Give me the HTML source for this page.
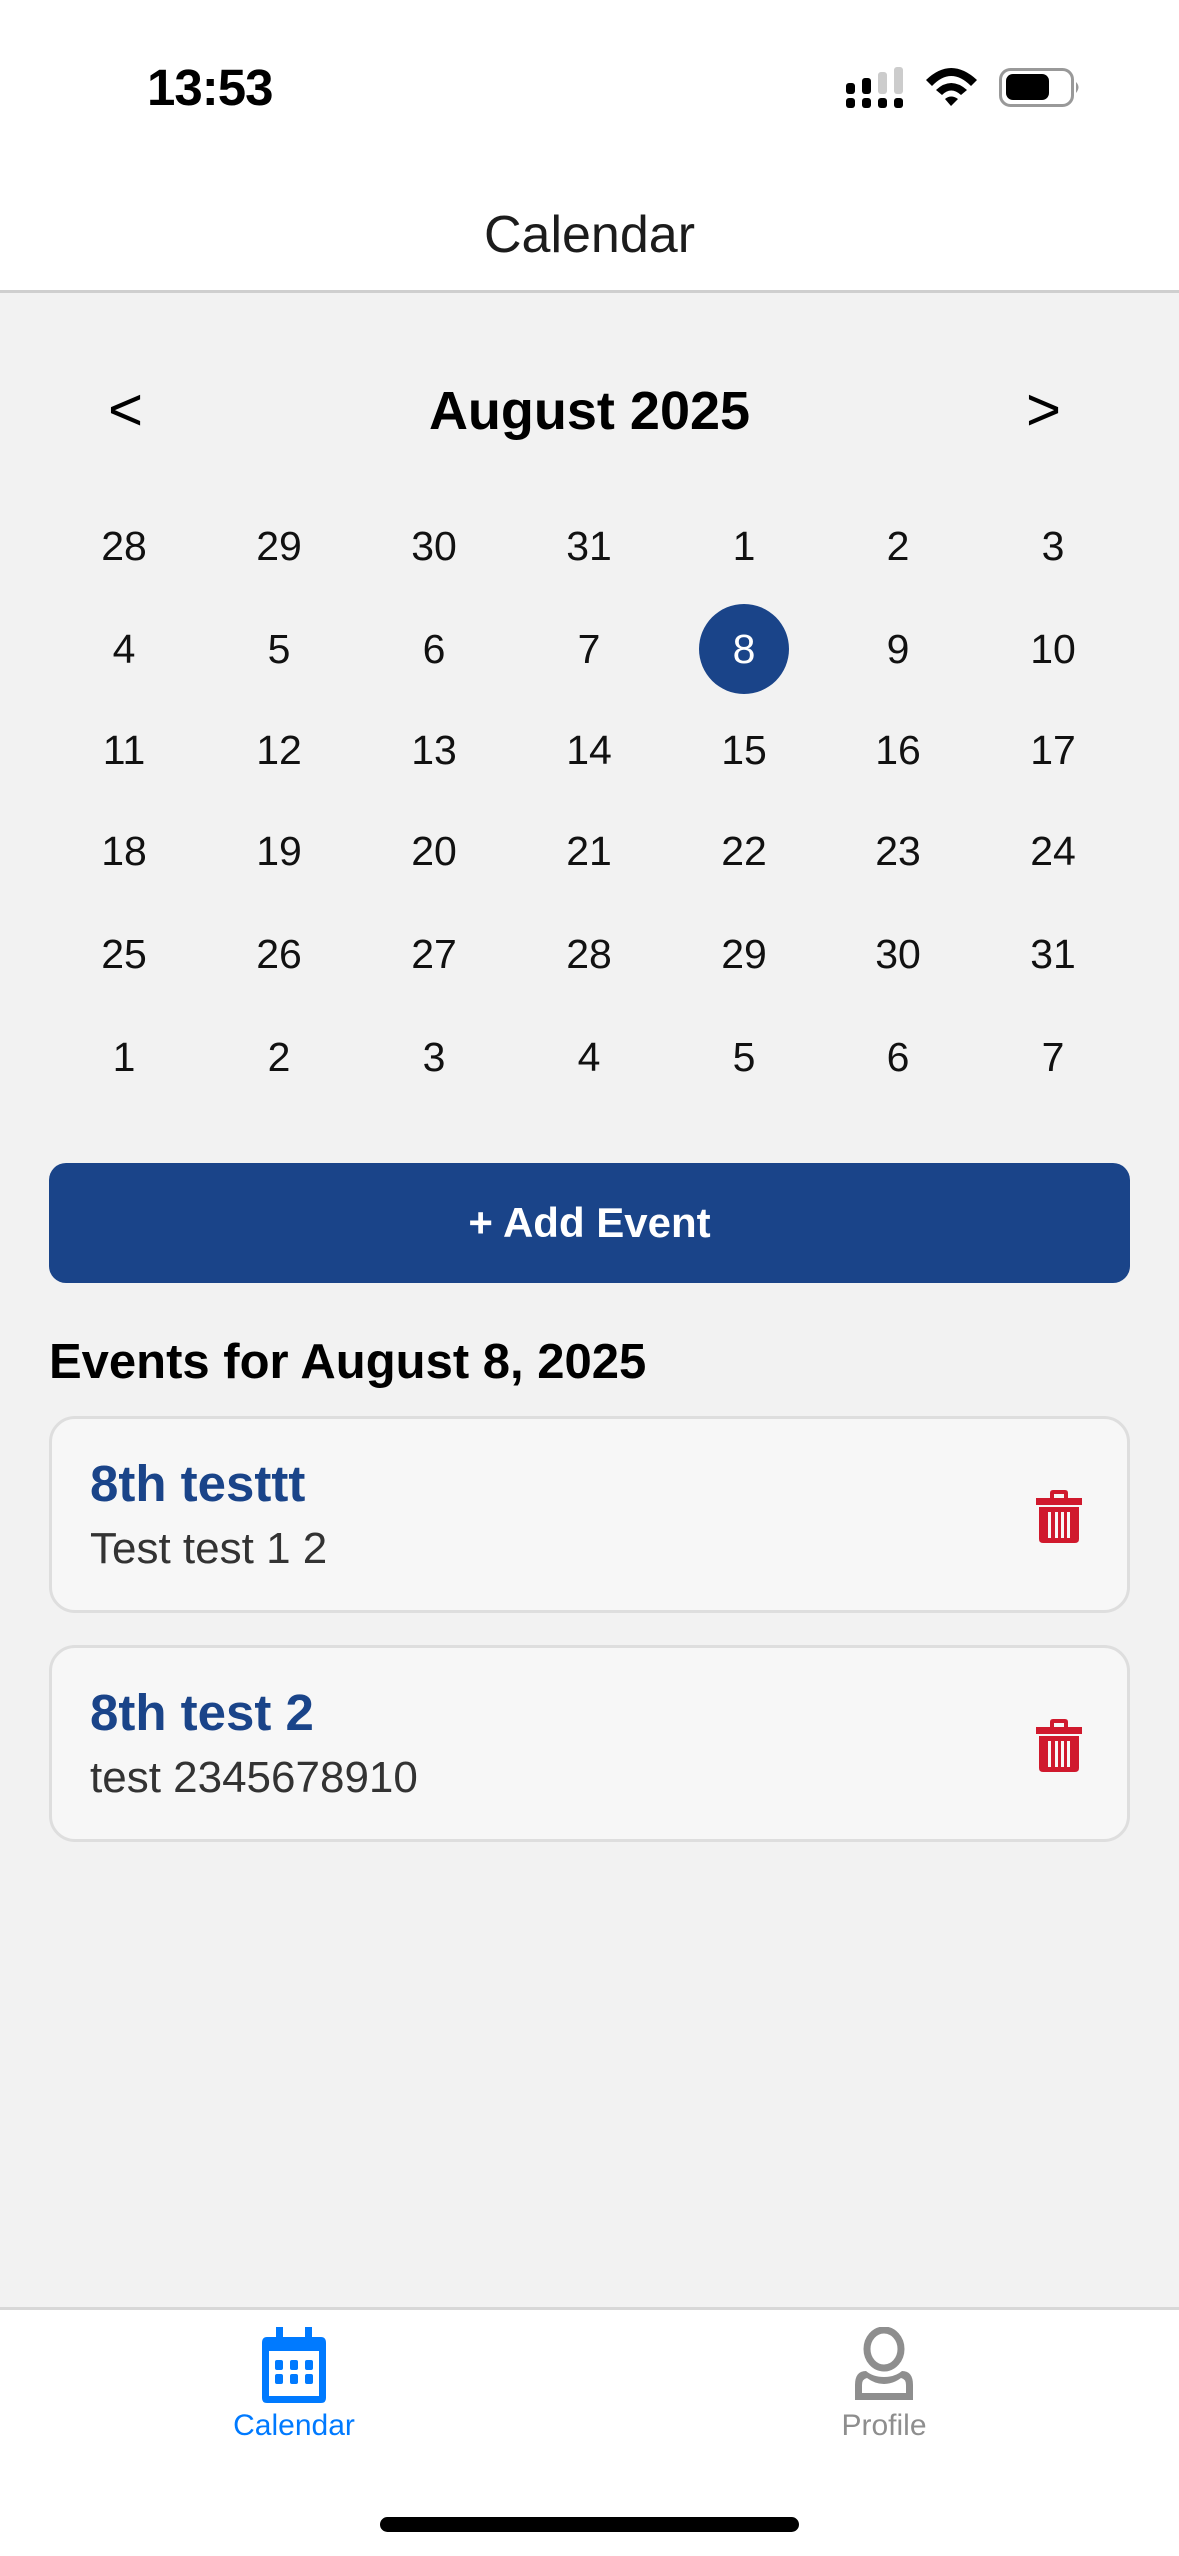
<!DOCTYPE html>
<html><head><meta charset="utf-8"><style>
*{margin:0;padding:0;box-sizing:border-box}
body{width:1179px;height:2556px;background:#f2f2f2;font-family:"Liberation Sans",sans-serif;position:relative;overflow:hidden;color:#000}
.a{position:absolute}
.hdr{left:0;top:0;width:1179px;height:293px;background:#fff;border-bottom:3px solid #cfcfcf}
.c{position:absolute;width:120px;margin-left:-60px;text-align:center;font-size:41px;line-height:50px;color:#111}
.card{position:absolute;left:49px;width:1081px;height:197px;background:#f7f7f7;border:3px solid #dedede;border-radius:26px}
.t{position:absolute;left:38px;font-weight:bold;font-size:51px;color:#1a4489;line-height:58px}
.s{position:absolute;left:38px;font-size:44px;color:#333;line-height:50px}
</style></head><body>
<div class="a hdr"></div>
<div class="a" style="left:147px;top:60px;font-size:51px;font-weight:bold;line-height:56px;letter-spacing:-1px">13:53</div>
<svg class="a" style="left:840px;top:60px" width="250" height="55" viewBox="840 60 250 55">
<rect x="846" y="98" width="9" height="10" rx="3"/><rect x="862" y="98" width="9" height="10" rx="3"/><rect x="878" y="98" width="9" height="10" rx="3"/><rect x="894" y="98" width="9" height="10" rx="3"/>
<rect x="846" y="83" width="9" height="11" rx="3"/><rect x="862" y="78" width="9" height="16" rx="3"/><rect x="878" y="72" width="9" height="22" rx="3" fill="#ccc"/><rect x="894" y="67" width="9" height="27" rx="3" fill="#ccc"/>
<path d="M926 80 Q951 56 977 80 L971 86 Q951 66 932 86Z M936 90 Q951 76 967 90 L961 95 Q951 86 942 95Z M945 99 Q951 94 958 99 L951 106Z"/>
<rect x="1000.5" y="69.5" width="72" height="36" rx="10" fill="none" stroke="#999" stroke-width="3"/>
<rect x="1006" y="74" width="43" height="26" rx="7"/>
<path d="M1076 82 Q1081 87 1076 93Z" fill="#999"/>
</svg>
<div class="a" style="left:0;width:1179px;top:205px;text-align:center;font-size:52px;line-height:60px;color:#1c1c1c">Calendar</div>
<div class="a" style="left:108px;top:378px;font-size:60px;line-height:64px">&lt;</div>
<div class="a" style="left:1026px;top:378px;font-size:60px;line-height:64px">&gt;</div>
<div class="a" style="left:0;width:1179px;top:380px;text-align:center;font-size:54px;font-weight:bold;line-height:62px">August 2025</div>
<div class="a" style="left:699px;top:604px;width:90px;height:90px;border-radius:45px;background:#1a4489"></div>
<div id="g"></div>
<div class="a" style="left:49px;top:1163px;width:1081px;height:120px;background:#1a4489;border-radius:17px;color:#fff;font-weight:bold;font-size:42px;line-height:120px;text-align:center">+ Add Event</div>
<div class="a" style="left:49px;top:1333px;font-weight:bold;font-size:49px;line-height:58px">Events for August 8, 2025</div>
<div class="card" style="top:1416px"><div class="t" style="top:36px">8th testtt</div><div class="s" style="top:105px">Test test 1 2</div>
<svg class="a" style="left:983px;top:71px" width="48" height="54" viewBox="0 0 48 54"><path d="M15 8 V3 Q15 0 18 0 H30 Q33 0 33 3 V8 H47 V15 H1 V8Z M19 8 H29 V4 H19Z" fill="#d0192d"/><path d="M4 17 H44 V49 Q44 53 40 53 H8 Q4 53 4 49Z" fill="#d0192d"/><rect x="13" y="22" width="3" height="26" fill="#f7f7f7"/><rect x="20" y="22" width="3" height="26" fill="#f7f7f7"/><rect x="26" y="22" width="3" height="26" fill="#f7f7f7"/><rect x="32" y="22" width="3" height="26" fill="#f7f7f7"/></svg></div>
<div class="card" style="top:1645px"><div class="t" style="top:36px">8th test 2</div><div class="s" style="top:105px">test 2345678910</div>
<svg class="a" style="left:983px;top:71px" width="48" height="54" viewBox="0 0 48 54"><path d="M15 8 V3 Q15 0 18 0 H30 Q33 0 33 3 V8 H47 V15 H1 V8Z M19 8 H29 V4 H19Z" fill="#d0192d"/><path d="M4 17 H44 V49 Q44 53 40 53 H8 Q4 53 4 49Z" fill="#d0192d"/><rect x="13" y="22" width="3" height="26" fill="#f7f7f7"/><rect x="20" y="22" width="3" height="26" fill="#f7f7f7"/><rect x="26" y="22" width="3" height="26" fill="#f7f7f7"/><rect x="32" y="22" width="3" height="26" fill="#f7f7f7"/></svg></div>
<div class="a" style="left:0;top:2307px;width:1179px;height:249px;background:#fff;border-top:3px solid #d8d8d8"></div>
<svg class="a" style="left:261px;top:2327px" width="66" height="76" viewBox="0 0 66 76"><rect x="15" y="0" width="7" height="14" fill="#007aff"/><rect x="44" y="0" width="7" height="14" fill="#007aff"/><path d="M6 10 H60 Q65 10 65 16 V71 Q65 76 60 76 H6 Q1 76 1 71 V16 Q1 10 6 10Z M8 24 V69 H58 V24Z" fill="#007aff" fill-rule="evenodd"/><g fill="#007aff"><rect x="14" y="33" width="8" height="10" rx="2"/><rect x="29" y="33" width="8" height="10" rx="2"/><rect x="44" y="33" width="8" height="10" rx="2"/><rect x="14" y="47" width="8" height="10" rx="2"/><rect x="29" y="47" width="8" height="10" rx="2"/><rect x="44" y="47" width="8" height="10" rx="2"/></g></svg>
<div class="a" style="left:194px;width:200px;top:2408px;text-align:center;font-size:30px;line-height:36px;color:#007aff">Calendar</div>
<svg class="a" style="left:851px;top:2327px" width="66" height="76" viewBox="0 0 66 76"><ellipse cx="33" cy="22" rx="17" ry="19" fill="none" stroke="#8e8e8e" stroke-width="7"/><path d="M4 73 V58 Q4 44 15 44 Q22 50 33 50 Q44 50 51 44 Q62 44 62 58 V73Z M11 66 H55 V58 Q55 52 50 51 Q42 57 33 57 Q24 57 16 51 Q11 52 11 58Z" fill="#8e8e8e" fill-rule="evenodd"/></svg>
<div class="a" style="left:784px;width:200px;top:2408px;text-align:center;font-size:30px;line-height:36px;color:#8e8e8e">Profile</div>
<div class="a" style="left:380px;top:2517px;width:419px;height:15px;border-radius:8px;background:#000"></div>
<script>
var rows=[[28,29,30,31,1,2,3],[4,5,6,7,8,9,10],[11,12,13,14,15,16,17],[18,19,20,21,22,23,24],[25,26,27,28,29,30,31],[1,2,3,4,5,6,7]];
var ys=[546,649,750,851,954,1057],xs=[124,279,434,589,744,898,1053],h='';
rows.forEach(function(r,i){r.forEach(function(d,j){h+='<div class="c" style="left:'+xs[j]+'px;top:'+(ys[i]-25)+'px'+(i==1&&j==4?';color:#fff':'')+'">'+d+'</div>';});});
document.getElementById('g').innerHTML=h;
</script>
</body></html>
